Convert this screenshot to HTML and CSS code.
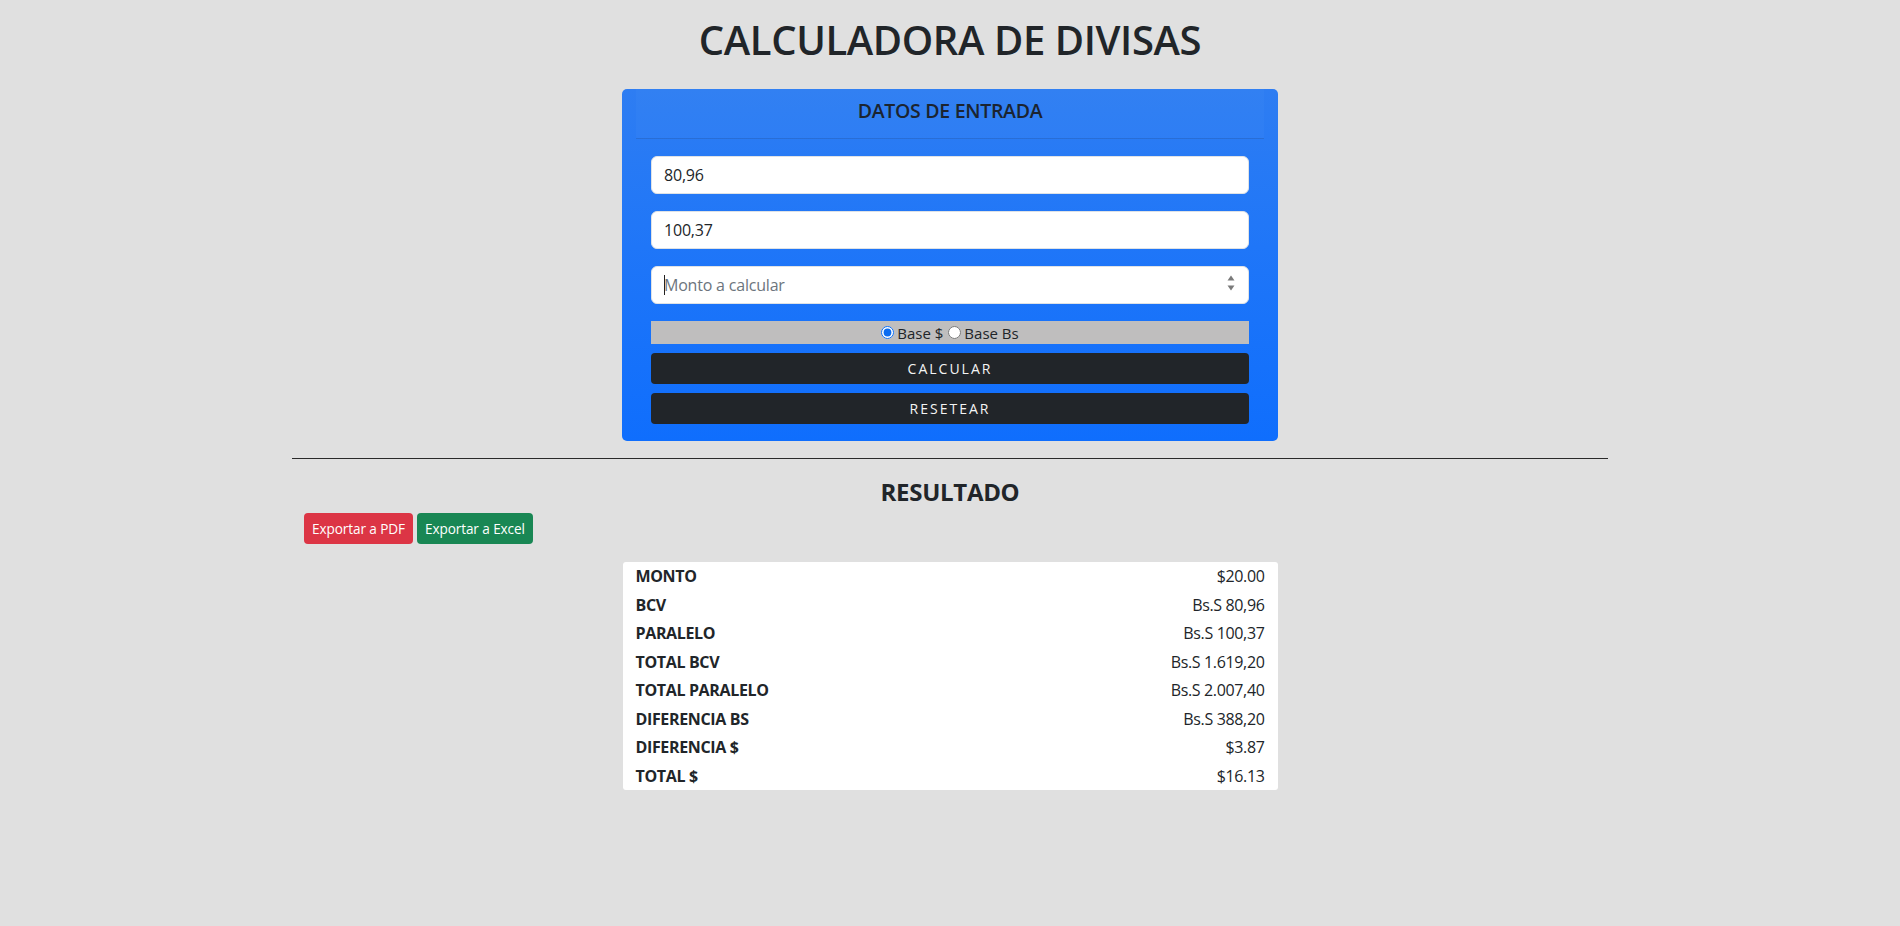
FILE: index.html
```html
<!DOCTYPE html>
<html lang="es">
<head>
<meta charset="utf-8">
<title>Calculadora de Divisas</title>
<link rel="stylesheet" href="styles.css">
</head>
<body>
<main class="page">
  <h1 class="title">CALCULADORA DE DIVISAS</h1>

  <section class="card">
    <div class="card-header">DATOS DE ENTRADA</div>
    <div class="card-body">
      <div class="field"><span class="value">80,96</span></div>
      <div class="field"><span class="value">100,37</span></div>
      <div class="field field-number">
        <span class="caret"></span>
        <span class="placeholder">Monto a calcular</span>
        <span class="spinner">
          <svg width="8" height="6" viewBox="0 0 8 6"><path d="M4 0.5 L7.5 5.5 L0.5 5.5 Z" fill="#7a7a7a"/></svg>
          <svg width="8" height="6" viewBox="0 0 8 6"><path d="M0.5 0.5 L7.5 0.5 L4 5.5 Z" fill="#7a7a7a"/></svg>
        </span>
      </div>
      <div class="radio-bar">
        <label class="radio"><input type="radio" name="base" checked> Base $</label>
        <label class="radio"><input type="radio" name="base"> Base Bs</label>
      </div>
      <button class="btn-dark">CALCULAR</button>
      <button class="btn-dark">RESETEAR</button>
    </div>
  </section>

  <div class="container">
    <hr class="divider">
    <h3 class="result-title">RESULTADO</h3>
    <div class="export-row">
      <button class="btn-sm btn-red">Exportar a PDF</button>
      <button class="btn-sm btn-green">Exportar a Excel</button>
    </div>
    <table class="result-table">
      <tbody>
        <tr><th>MONTO</th><td>$20.00</td></tr>
        <tr><th>BCV</th><td>Bs.S 80,96</td></tr>
        <tr><th>PARALELO</th><td>Bs.S 100,37</td></tr>
        <tr><th>TOTAL BCV</th><td>Bs.S 1.619,20</td></tr>
        <tr><th>TOTAL PARALELO</th><td>Bs.S 2.007,40</td></tr>
        <tr><th>DIFERENCIA BS</th><td>Bs.S 388,20</td></tr>
        <tr><th>DIFERENCIA $</th><td>$3.87</td></tr>
        <tr><th>TOTAL $</th><td>$16.13</td></tr>
      </tbody>
    </table>
  </div>
</main>
</body>
</html>
```

FILE: styles.css
```css
* { box-sizing: border-box; }

html, body {
  margin: 0;
  background: #e0e0e0;
}

body {
  font-family: "Segoe UI", "Open Sans", "Noto Sans", sans-serif;
  color: #212529;
  font-size: 16px;
}

.page {
  padding-top: 16px;
}

.title {
  margin: 0 0 25px;
  text-align: center;
  font-size: 40px;
  line-height: 48px;
  font-weight: 600;
  letter-spacing: -0.4px;
  color: #212529;
}

.card {
  width: 656px;
  margin: 0 auto;
  padding: 0 14px 17px;
  border-radius: 5px;
  background: linear-gradient(180deg, #2e7df2 0%, #1f76f8 45%, #0f6efd 100%);
}

.card-header {
  height: 50px;
  padding-bottom: 6px;
  display: flex;
  align-items: center;
  justify-content: center;
  font-size: 19.5px;
  font-weight: 600;
  letter-spacing: -0.3px;
  color: #1b2430;
  background: rgba(255, 255, 255, 0.025);
  border-bottom: 1px solid rgba(0, 0, 0, 0.12);
}

.card-body {
  padding: 17px 15px 0;
  display: flex;
  flex-direction: column;
}

.field {
  position: relative;
  height: 38px;
  margin-bottom: 17px;
  padding: 0 12px;
  display: flex;
  align-items: center;
  background: #fff;
  border: 1px solid #dee2e6;
  border-radius: 6px;
  font-size: 16px;
  letter-spacing: -0.2px;
  color: #212529;
}

.placeholder {
  color: #6c757d;
}

.caret {
  position: absolute;
  left: 12px;
  top: 8px;
  width: 1px;
  height: 20px;
  background: #222;
}

.spinner {
  position: absolute;
  right: 13px;
  top: 8px;
  display: flex;
  flex-direction: column;
  gap: 4px;
}

.spinner svg { display: block; }

.radio-bar {
  height: 23px;
  margin-bottom: 9px;
  display: flex;
  align-items: center;
  justify-content: center;
  gap: 5px;
  background: #bfbebe;
  font-size: 15px;
  color: #212529;
}

.radio {
  display: flex;
  align-items: center;
  gap: 3px;
}

.radio input {
  margin: 0;
  width: 13px;
  height: 13px;
  accent-color: #0b6cf0;
}

.btn-dark {
  height: 31px;
  margin: 0 0 9px;
  padding: 0;
  border: 0;
  border-radius: 4px;
  background: #212529;
  color: #f4f4f4;
  font-family: inherit;
  font-size: 14px;
  letter-spacing: 2px;
  font-weight: 500;
}

.btn-dark:last-child { margin-bottom: 0; }

.container {
  width: 1316px;
  margin: 0 auto;
}

.divider {
  margin: 17px 0 0;
  border: 0;
  border-top: 1px solid #2a2a2a;
}

.result-title {
  margin: 18px 0 7px;
  text-align: center;
  font-size: 24px;
  line-height: 29px;
  font-weight: 700;
  letter-spacing: -0.3px;
}

.export-row {
  padding-left: 12px;
  display: flex;
  gap: 4px;
}

.btn-sm {
  height: 31px;
  padding: 0 8px;
  border: 0;
  border-radius: 4px;
  font-family: inherit;
  font-size: 13.6px;
  letter-spacing: -0.1px;
  color: #fff;
}

.btn-red { background: #dc3545; }
.btn-green { background: #198754; }

.result-table {
  width: 655px;
  margin: 18px auto 0;
  border-collapse: collapse;
  background: #fff;
  border-radius: 3px;
}

.result-table th,
.result-table td {
  padding: 2px 13px;
  line-height: 24.5px;
  font-size: 16px;
  letter-spacing: -0.35px;
}

.result-table th {
  text-align: left;
  font-weight: 700;
}

.result-table td {
  text-align: right;
  font-weight: 400;
}
```
